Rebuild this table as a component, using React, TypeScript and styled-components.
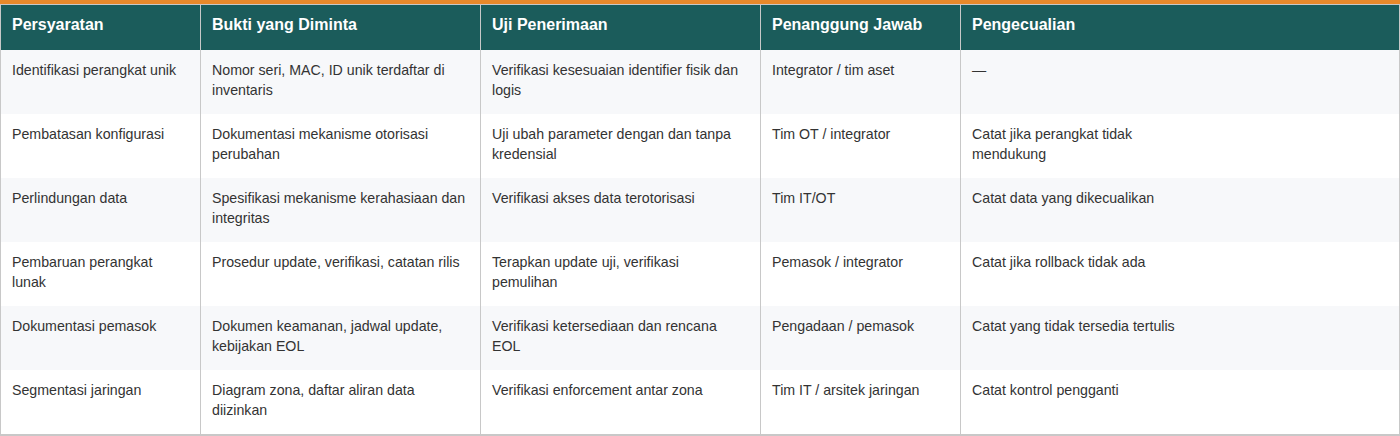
import React from 'react'
import styled, { createGlobalStyle } from 'styled-components'

const GlobalStyle = createGlobalStyle`
  body {
    margin: 0;
    background: #ffffff;
    font-family: 'Liberation Sans', Arial, sans-serif;
  }
`;

const Page = styled.div`
  width: 1400px;
  border-top: 4px solid #e8892b;
`;

const Table = styled.div`
  display: grid;
  grid-template-columns: 199px 280px 280px 200px 1fr;
  border: 1px solid #c8c8c8;
  border-bottom-width: 2px;
`;

const HeadCell = styled.div<{ $first?: boolean }>`
  box-sizing: border-box;
  height: 45px;
  padding: 10px 11px 0;
  background-color: #1b5c5b;
  color: #ffffff;
  font-size: 16px;
  font-weight: 700;
  line-height: 20px;
  border-left: ${(p) => (p.$first ? 'none' : '1px solid #c8c8c8')};
`;

const Cell = styled.div<{ $first?: boolean; $alt?: boolean }>`
  box-sizing: border-box;
  height: 64px;
  padding: 10px 13px 10px 11px;
  background-color: ${(p) => (p.$alt ? '#ffffff' : '#f7f8fa')};
  color: #333333;
  font-size: 14.2px;
  line-height: 20px;
  border-left: ${(p) => (p.$first ? 'none' : '1px solid #c8c8c8')};
`;

const Narrow = styled.div`
  max-width: 218px;
`;

const headers = ['Persyaratan', 'Bukti yang Diminta', 'Uji Penerimaan', 'Penanggung Jawab', 'Pengecualian'];

const rows = [
  ['Identifikasi perangkat unik', 'Nomor seri, MAC, ID unik terdaftar di inventaris', 'Verifikasi kesesuaian identifier fisik dan logis', 'Integrator / tim aset', '—'],
  ['Pembatasan konfigurasi', 'Dokumentasi mekanisme otorisasi perubahan', 'Uji ubah parameter dengan dan tanpa kredensial', 'Tim OT / integrator', 'Catat jika perangkat tidak mendukung'],
  ['Perlindungan data', 'Spesifikasi mekanisme kerahasiaan dan integritas', 'Verifikasi akses data terotorisasi', 'Tim IT/OT', 'Catat data yang dikecualikan'],
  ['Pembaruan perangkat lunak', 'Prosedur update, verifikasi, catatan rilis', 'Terapkan update uji, verifikasi pemulihan', 'Pemasok / integrator', 'Catat jika rollback tidak ada'],
  ['Dokumentasi pemasok', 'Dokumen keamanan, jadwal update, kebijakan EOL', 'Verifikasi ketersediaan dan rencana EOL', 'Pengadaan / pemasok', 'Catat yang tidak tersedia tertulis'],
  ['Segmentasi jaringan', 'Diagram zona, daftar aliran data diizinkan', 'Verifikasi enforcement antar zona', 'Tim IT / arsitek jaringan', 'Catat kontrol pengganti'],
];

export default function App() {
  return (
    <Page>
      <GlobalStyle />
      <Table>
        {headers.map((h, i) => (
          <HeadCell key={h} $first={i === 0}>{h}</HeadCell>
        ))}
        {rows.map((row, r) =>
          row.map((text, c) => (
            <Cell key={`${r}-${c}`} $first={c === 0} $alt={r % 2 === 1}>
              {c === 4 ? <Narrow>{text}</Narrow> : text}
            </Cell>
          ))
        )}
      </Table>
    </Page>
  );
}
